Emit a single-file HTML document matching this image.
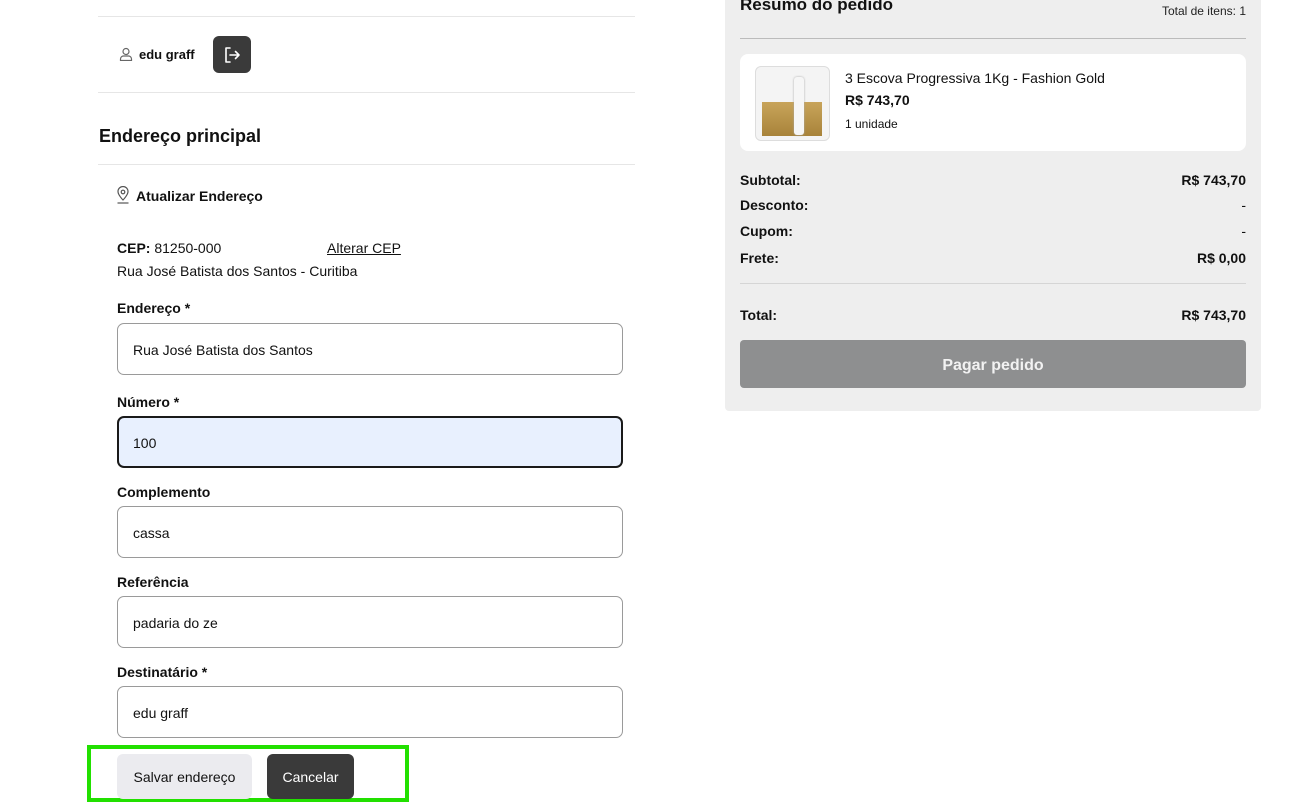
<!DOCTYPE html>
<html><head><meta charset="utf-8"><style>
*{box-sizing:border-box;margin:0;padding:0}
body{width:1303px;height:810px;overflow:hidden;background:#fff;font-family:"Liberation Sans",sans-serif;color:#111;position:relative}
.a{position:absolute}
.hr{position:absolute;left:98px;width:537px;height:1px;background:#e6e6e6}
.lbl{position:absolute;left:117px;font-size:14px;font-weight:bold;color:#111}
.inp{position:absolute;left:117px;width:506px;height:52px;border:1px solid #9a9a9a;border-radius:7px;font-size:14px;padding:1px 0 0 15px;line-height:50px;color:#111}
.row{position:absolute;left:740px;width:506px;font-size:14px;font-weight:bold;display:flex;justify-content:space-between}
</style></head><body>
<div class="hr" style="top:16px"></div>
<svg class="a" style="left:119px;top:47px" width="14" height="14" viewBox="0 0 14 14" fill="none" stroke="#666" stroke-width="1.2"><circle cx="7" cy="4.5" r="3"/><path d="M1.5 13.5v-1.5a3 3 0 0 1 3-3h5a3 3 0 0 1 3 3v1.5z"/></svg>
<div class="a" style="left:139px;top:47px;font-size:13px;font-weight:bold">edu graff</div>
<div class="a" style="left:213px;top:36px;width:38px;height:37px;background:#3a3a3a;border-radius:6px"></div>
<svg class="a" style="left:222px;top:45px" width="20" height="20" viewBox="0 0 20 20" fill="none" stroke="#fff" stroke-width="1.6" stroke-linecap="round" stroke-linejoin="round"><path d="M8 3H4v14h4"/><path d="M8 10h9M13.5 6.5 17 10l-3.5 3.5"/></svg>
<div class="hr" style="top:92px"></div>
<div class="a" style="left:99px;top:126px;font-size:18px;font-weight:bold">Endereço principal</div>
<div class="hr" style="top:164px"></div>
<svg class="a" style="left:116px;top:186px" width="14" height="18" viewBox="0 0 14 18" fill="none" stroke="#555" stroke-width="1.2"><path d="M7 14s5-5 5-8.5A5 5 0 0 0 2 5.5C2 9 7 14 7 14z"/><circle cx="7" cy="6" r="1.8"/><path d="M1.5 17h11"/></svg>
<div class="a" style="left:136px;top:188px;font-size:14px;font-weight:bold">Atualizar Endereço</div>
<div class="a" style="left:117px;top:240px;font-size:14px"><b>CEP:</b> 81250-000</div>
<div class="a" style="left:327px;top:240px;font-size:14px;text-decoration:underline">Alterar CEP</div>
<div class="a" style="left:117px;top:263px;font-size:14px">Rua José Batista dos Santos - Curitiba</div>
<div class="lbl" style="top:300px">Endereço *</div>
<div class="inp" style="top:323px">Rua José Batista dos Santos</div>
<div class="lbl" style="top:394px">Número *</div>
<div class="inp" style="top:416px;background:#e8f0fe;border:2px solid #1a1a1a;padding-left:14px;line-height:48px">100</div>
<div class="lbl" style="top:484px">Complemento</div>
<div class="inp" style="top:506px">cassa</div>
<div class="lbl" style="top:574px">Referência</div>
<div class="inp" style="top:596px">padaria do ze</div>
<div class="lbl" style="top:664px">Destinatário *</div>
<div class="inp" style="top:686px">edu graff</div>
<div class="a" style="left:87px;top:745px;width:322px;height:57px;border:4px solid #22e000"></div>
<div class="a" style="left:117px;top:754px;width:135px;height:45px;background:#ebebef;border-radius:6px;font-size:14px;line-height:46px;text-align:center">Salvar endereço</div>
<div class="a" style="left:267px;top:754px;width:87px;height:45px;background:#3a3a3a;color:#fff;border-radius:6px;font-size:14px;line-height:46px;text-align:center">Cancelar</div>

<div class="a" style="left:725px;top:0;width:536px;height:411px;background:#eee;border-radius:0 0 4px 4px"></div>
<div class="a" style="left:740px;top:-5px;font-size:17px;font-weight:bold">Resumo do pedido</div>
<div class="a" style="left:1100px;top:4px;width:146px;text-align:right;font-size:12px;color:#222">Total de itens: 1</div>
<div class="a" style="left:740px;top:38px;width:506px;height:1px;background:#bbb"></div>
<div class="a" style="left:740px;top:54px;width:506px;height:97px;background:#fff;border-radius:8px"></div>
<div class="a" style="left:755px;top:66px;width:75px;height:75px;border:1px solid #ddd;border-radius:6px;background:#f4f4f4;overflow:hidden">
<div class="a" style="left:6px;top:35px;width:60px;height:34px;background:linear-gradient(#c8a45a,#a8833a)"></div>
<div class="a" style="left:38px;top:10px;width:10px;height:58px;background:#f6f6f6;border-radius:3px;box-shadow:0 0 2px #aaa"></div>
</div>
<div class="a" style="left:845px;top:70px;font-size:14px">3 Escova Progressiva 1Kg - Fashion Gold</div>
<div class="a" style="left:845px;top:92px;font-size:14px;font-weight:bold">R$ 743,70</div>
<div class="a" style="left:845px;top:117px;font-size:12px">1 unidade</div>
<div class="row" style="top:172px"><span>Subtotal:</span><span>R$ 743,70</span></div>
<div class="row" style="top:197px"><span>Desconto:</span><span style="font-weight:normal">-</span></div>
<div class="row" style="top:223px"><span>Cupom:</span><span style="font-weight:normal">-</span></div>
<div class="row" style="top:250px"><span>Frete:</span><span>R$ 0,00</span></div>
<div class="a" style="left:740px;top:283px;width:506px;height:1px;background:#d5d5d5"></div>
<div class="row" style="top:307px"><span>Total:</span><span>R$ 743,70</span></div>
<div class="a" style="left:740px;top:340px;width:506px;height:48px;background:#8e8f90;border-radius:4px;color:#f2f2f2;font-size:16px;font-weight:bold;text-align:center;line-height:52px">Pagar pedido</div>
</body></html>
